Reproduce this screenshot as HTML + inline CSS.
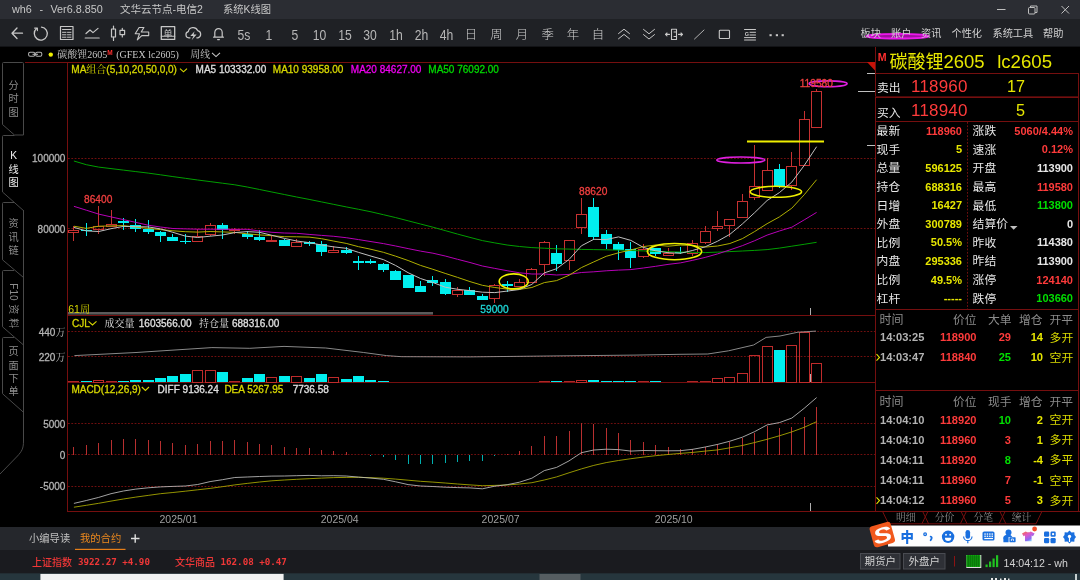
<!DOCTYPE html>
<html lang="zh-CN"><head><meta charset="utf-8"><title>wh6 - 系统K线图</title>
<style>
html,body{margin:0;padding:0;background:#000;overflow:hidden}
body{width:1080px;height:580px;font-family:"Liberation Sans","Noto Sans CJK SC",sans-serif}
svg{display:block;position:absolute;left:0;top:0;will-change:transform;opacity:0.999}
text{white-space:pre}
</style></head><body>
<svg width="1080" height="580" viewBox="0 0 1080 580">
<rect x="0" y="0" width="1080" height="580" fill="#000"/>
<rect x="0" y="0" width="1080" height="19" fill="#2c2e34"/>
<rect x="0" y="19" width="1080" height="27.6" fill="#202226"/>
<rect x="0" y="527" width="1080" height="23" fill="#26282d"/>
<rect x="0" y="550" width="1080" height="24" fill="#1b1c20"/>
<rect x="0" y="573.3" width="1080" height="6.7" fill="#27373e"/>
<rect x="40.4" y="573.9" width="243.2" height="6.2" fill="#f2f2f2"/>
<rect x="539.5" y="574" width="41" height="6" fill="#565e62"/>
<g stroke="#761010" stroke-width="1" fill="none" shape-rendering="crispEdges">
<line x1="25" y1="62.5" x2="875" y2="62.5"/>
<line x1="67.5" y1="62" x2="67.5" y2="511"/>
<line x1="67" y1="315.5" x2="875" y2="315.5"/>
<line x1="67" y1="382.5" x2="875" y2="382.5"/>
<line x1="67" y1="511.5" x2="1080" y2="511.5"/>
<line x1="875.5" y1="47" x2="875.5" y2="511"/>
</g>
<g stroke="#701010" stroke-width="1" stroke-dasharray="1.8 1.53" fill="none">
<line x1="68" y1="158.5" x2="875" y2="158.5"/>
<line x1="68" y1="228.5" x2="875" y2="228.5"/>
<line x1="68" y1="331.5" x2="875" y2="331.5"/>
<line x1="68" y1="356.5" x2="875" y2="356.5"/>
<line x1="68" y1="423.5" x2="875" y2="423.5"/>
<line x1="68" y1="454.5" x2="875" y2="454.5"/>
<line x1="68" y1="486.5" x2="875" y2="486.5"/>
</g>
<rect x="68" y="312" width="365" height="2.6" fill="#5c5c5c"/>
<polygon points="867,62 875,62 875,70.5" fill="#c8140a"/>
<g stroke="#c0c0c0" stroke-width="1" shape-rendering="crispEdges"><line x1="867" y1="73.5" x2="875" y2="73.5"/><line x1="858" y1="91.5" x2="875" y2="91.5"/><line x1="867" y1="145.5" x2="875" y2="145.5"/></g>
<g stroke="#b0b0b0" stroke-width="1" shape-rendering="crispEdges"><line x1="810.5" y1="308" x2="810.5" y2="315"/><line x1="810.5" y1="374" x2="810.5" y2="382"/><line x1="810.5" y1="503" x2="810.5" y2="511"/></g>
<g stroke="#c83232" stroke-width="1" fill="none" shape-rendering="crispEdges">
<line x1="73.5" y1="226.0" x2="73.5" y2="230.5"/>
<line x1="73.5" y1="232.5" x2="73.5" y2="241.0"/>
<rect x="68.5" y="230.5" width="10" height="2.0"/></g>
<g shape-rendering="crispEdges"><line x1="86.5" y1="223.0" x2="86.5" y2="236.0" stroke="#00f0f0" stroke-width="1"/>
<rect x="81" y="230" width="11" height="1" fill="#00f0f0"/></g>
<g stroke="#c83232" stroke-width="1" fill="none" shape-rendering="crispEdges">
<line x1="98.5" y1="206.0" x2="98.5" y2="226.5"/>
<line x1="98.5" y1="229.5" x2="98.5" y2="234.0"/>
<rect x="93.5" y="226.5" width="10" height="3.0"/></g>
<g stroke="#c83232" stroke-width="1" fill="none" shape-rendering="crispEdges">
<line x1="111.5" y1="210.0" x2="111.5" y2="224.5"/>
<rect x="106.5" y="224.5" width="10" height="2.0"/></g>
<g shape-rendering="crispEdges"><line x1="123.5" y1="218.0" x2="123.5" y2="230.0" stroke="#00f0f0" stroke-width="1"/>
<rect x="118" y="221" width="11" height="2" fill="#00f0f0"/></g>
<g shape-rendering="crispEdges"><line x1="135.5" y1="219.0" x2="135.5" y2="232.0" stroke="#00f0f0" stroke-width="1"/>
<rect x="130" y="225" width="11" height="4" fill="#00f0f0"/></g>
<g shape-rendering="crispEdges"><line x1="148.5" y1="220.0" x2="148.5" y2="234.0" stroke="#00f0f0" stroke-width="1"/>
<rect x="143" y="229" width="11" height="3" fill="#00f0f0"/></g>
<g shape-rendering="crispEdges"><line x1="160.5" y1="231.0" x2="160.5" y2="242.0" stroke="#00f0f0" stroke-width="1"/>
<rect x="155" y="232" width="11" height="4" fill="#00f0f0"/></g>
<g shape-rendering="crispEdges"><line x1="172.5" y1="234.0" x2="172.5" y2="241.0" stroke="#00f0f0" stroke-width="1"/>
<rect x="167" y="237" width="11" height="4" fill="#00f0f0"/></g>
<g shape-rendering="crispEdges"><line x1="185.5" y1="234.0" x2="185.5" y2="244.0" stroke="#00f0f0" stroke-width="1"/>
<rect x="180" y="241" width="11" height="1" fill="#00f0f0"/></g>
<g stroke="#c83232" stroke-width="1" fill="none" shape-rendering="crispEdges">
<line x1="197.5" y1="229.0" x2="197.5" y2="236.5"/>
<rect x="192.5" y="236.5" width="10" height="5.0"/></g>
<g stroke="#c83232" stroke-width="1" fill="none" shape-rendering="crispEdges">
<line x1="210.5" y1="223.0" x2="210.5" y2="225.5"/>
<line x1="210.5" y1="234.5" x2="210.5" y2="236.0"/>
<rect x="205.5" y="225.5" width="10" height="9.0"/></g>
<g shape-rendering="crispEdges"><line x1="222.5" y1="223.0" x2="222.5" y2="239.0" stroke="#00f0f0" stroke-width="1"/>
<rect x="217" y="225" width="11" height="5" fill="#00f0f0"/></g>
<g stroke="#c83232" stroke-width="1" fill="none" shape-rendering="crispEdges">
<line x1="234.5" y1="228.0" x2="234.5" y2="229.5"/>
<line x1="234.5" y1="230.5" x2="234.5" y2="234.0"/>
<rect x="229.5" y="229.5" width="10" height="1.0"/></g>
<g shape-rendering="crispEdges"><line x1="247.5" y1="231.0" x2="247.5" y2="239.0" stroke="#00f0f0" stroke-width="1"/>
<rect x="242" y="234" width="11" height="3" fill="#00f0f0"/></g>
<g shape-rendering="crispEdges"><line x1="259.5" y1="230.0" x2="259.5" y2="241.0" stroke="#00f0f0" stroke-width="1"/>
<rect x="254" y="237" width="11" height="3" fill="#00f0f0"/></g>
<g stroke="#c83232" stroke-width="1" fill="none" shape-rendering="crispEdges">
<line x1="271.5" y1="236.0" x2="271.5" y2="240.5"/>
<rect x="266.5" y="240.5" width="10" height="1.0"/></g>
<g shape-rendering="crispEdges"><line x1="284.5" y1="239.0" x2="284.5" y2="246.0" stroke="#00f0f0" stroke-width="1"/>
<rect x="279" y="240" width="11" height="6" fill="#00f0f0"/></g>
<g stroke="#c83232" stroke-width="1" fill="none" shape-rendering="crispEdges">
<line x1="296.5" y1="239.0" x2="296.5" y2="242.5"/>
<rect x="291.5" y="242.5" width="10" height="4.0"/></g>
<g shape-rendering="crispEdges"><line x1="309.5" y1="241.0" x2="309.5" y2="246.0" stroke="#00f0f0" stroke-width="1"/>
<rect x="304" y="242" width="11" height="2" fill="#00f0f0"/></g>
<g shape-rendering="crispEdges"><line x1="321.5" y1="241.0" x2="321.5" y2="256.0" stroke="#00f0f0" stroke-width="1"/>
<rect x="316" y="244" width="11" height="8" fill="#00f0f0"/></g>
<g stroke="#c83232" stroke-width="1" fill="none" shape-rendering="crispEdges">
<line x1="333.5" y1="246.0" x2="333.5" y2="250.5"/>
<rect x="328.5" y="250.5" width="10" height="2.0"/></g>
<g shape-rendering="crispEdges"><line x1="346.5" y1="247.0" x2="346.5" y2="254.0" stroke="#00f0f0" stroke-width="1"/>
<rect x="341" y="250" width="11" height="3" fill="#00f0f0"/></g>
<g shape-rendering="crispEdges"><line x1="358.5" y1="256.0" x2="358.5" y2="270.0" stroke="#00f0f0" stroke-width="1"/>
<rect x="353" y="261" width="11" height="2" fill="#00f0f0"/></g>
<g shape-rendering="crispEdges"><line x1="370.5" y1="259.0" x2="370.5" y2="264.0" stroke="#00f0f0" stroke-width="1"/>
<rect x="365" y="261" width="11" height="2" fill="#00f0f0"/></g>
<g shape-rendering="crispEdges"><line x1="383.5" y1="263.0" x2="383.5" y2="272.0" stroke="#00f0f0" stroke-width="1"/>
<rect x="378" y="264" width="11" height="6" fill="#00f0f0"/></g>
<g shape-rendering="crispEdges"><line x1="395.5" y1="270.0" x2="395.5" y2="280.0" stroke="#00f0f0" stroke-width="1"/>
<rect x="390" y="271" width="11" height="9" fill="#00f0f0"/></g>
<g shape-rendering="crispEdges"><line x1="408.5" y1="275.0" x2="408.5" y2="288.0" stroke="#00f0f0" stroke-width="1"/>
<rect x="403" y="275" width="11" height="13" fill="#00f0f0"/></g>
<g shape-rendering="crispEdges"><line x1="420.5" y1="281.0" x2="420.5" y2="292.0" stroke="#00f0f0" stroke-width="1"/>
<rect x="415" y="286" width="11" height="6" fill="#00f0f0"/></g>
<g shape-rendering="crispEdges"><line x1="432.5" y1="276.0" x2="432.5" y2="286.0" stroke="#00f0f0" stroke-width="1"/>
<rect x="427" y="280" width="11" height="3" fill="#00f0f0"/></g>
<g shape-rendering="crispEdges"><line x1="445.5" y1="279.0" x2="445.5" y2="295.0" stroke="#00f0f0" stroke-width="1"/>
<rect x="440" y="282" width="11" height="12" fill="#00f0f0"/></g>
<g stroke="#c83232" stroke-width="1" fill="none" shape-rendering="crispEdges">
<line x1="457.5" y1="287.0" x2="457.5" y2="290.5"/>
<line x1="457.5" y1="294.5" x2="457.5" y2="297.0"/>
<rect x="452.5" y="290.5" width="10" height="4.0"/></g>
<g shape-rendering="crispEdges"><line x1="469.5" y1="287.0" x2="469.5" y2="295.0" stroke="#00f0f0" stroke-width="1"/>
<rect x="464" y="290" width="11" height="5" fill="#00f0f0"/></g>
<g shape-rendering="crispEdges"><line x1="482.5" y1="294.0" x2="482.5" y2="300.0" stroke="#00f0f0" stroke-width="1"/>
<rect x="477" y="296" width="11" height="4" fill="#00f0f0"/></g>
<g stroke="#c83232" stroke-width="1" fill="none" shape-rendering="crispEdges">
<line x1="494.5" y1="284.0" x2="494.5" y2="285.5"/>
<line x1="494.5" y1="298.5" x2="494.5" y2="303.0"/>
<rect x="489.5" y="285.5" width="10" height="13.0"/></g>
<g shape-rendering="crispEdges"><line x1="507.5" y1="281.0" x2="507.5" y2="292.0" stroke="#00f0f0" stroke-width="1"/>
<rect x="502" y="284" width="11" height="2" fill="#00f0f0"/></g>
<g stroke="#c83232" stroke-width="1" fill="none" shape-rendering="crispEdges">
<line x1="519.5" y1="279.0" x2="519.5" y2="282.5"/>
<rect x="514.5" y="282.5" width="10" height="4.0"/></g>
<g stroke="#c83232" stroke-width="1" fill="none" shape-rendering="crispEdges">
<line x1="531.5" y1="268.0" x2="531.5" y2="269.5"/>
<rect x="526.5" y="269.5" width="10" height="13.0"/></g>
<g stroke="#c83232" stroke-width="1" fill="none" shape-rendering="crispEdges">
<line x1="544.5" y1="241.0" x2="544.5" y2="242.5"/>
<line x1="544.5" y1="264.5" x2="544.5" y2="276.0"/>
<rect x="539.5" y="242.5" width="10" height="22.0"/></g>
<g shape-rendering="crispEdges"><line x1="556.5" y1="245.0" x2="556.5" y2="271.0" stroke="#00f0f0" stroke-width="1"/>
<rect x="551" y="253" width="11" height="11" fill="#00f0f0"/></g>
<g stroke="#c83232" stroke-width="1" fill="none" shape-rendering="crispEdges">
<line x1="569.5" y1="260.5" x2="569.5" y2="270.0"/>
<rect x="564.5" y="240.5" width="10" height="20.0"/></g>
<g stroke="#c83232" stroke-width="1" fill="none" shape-rendering="crispEdges">
<line x1="581.5" y1="198.0" x2="581.5" y2="214.5"/>
<line x1="581.5" y1="227.5" x2="581.5" y2="234.0"/>
<rect x="576.5" y="214.5" width="10" height="13.0"/></g>
<g shape-rendering="crispEdges"><line x1="593.5" y1="198.0" x2="593.5" y2="240.0" stroke="#00f0f0" stroke-width="1"/>
<rect x="588" y="207" width="11" height="30" fill="#00f0f0"/></g>
<g shape-rendering="crispEdges"><line x1="606.5" y1="230.0" x2="606.5" y2="249.0" stroke="#00f0f0" stroke-width="1"/>
<rect x="601" y="234" width="11" height="10" fill="#00f0f0"/></g>
<g shape-rendering="crispEdges"><line x1="618.5" y1="242.0" x2="618.5" y2="260.0" stroke="#00f0f0" stroke-width="1"/>
<rect x="613" y="244" width="11" height="6" fill="#00f0f0"/></g>
<g shape-rendering="crispEdges"><line x1="630.5" y1="242.0" x2="630.5" y2="268.0" stroke="#00f0f0" stroke-width="1"/>
<rect x="625" y="249" width="11" height="9" fill="#00f0f0"/></g>
<g stroke="#c83232" stroke-width="1" fill="none" shape-rendering="crispEdges">
<line x1="643.5" y1="244.0" x2="643.5" y2="249.5"/>
<line x1="643.5" y1="256.5" x2="643.5" y2="258.0"/>
<rect x="638.5" y="249.5" width="10" height="7.0"/></g>
<g shape-rendering="crispEdges"><line x1="655.5" y1="248.0" x2="655.5" y2="256.0" stroke="#00f0f0" stroke-width="1"/>
<rect x="650" y="248" width="11" height="6" fill="#00f0f0"/></g>
<g stroke="#c83232" stroke-width="1" fill="none" shape-rendering="crispEdges">
<line x1="668.5" y1="248.0" x2="668.5" y2="253.5"/>
<rect x="663.5" y="253.5" width="10" height="2.0"/></g>
<g shape-rendering="crispEdges"><line x1="680.5" y1="247.0" x2="680.5" y2="254.0" stroke="#00f0f0" stroke-width="1"/>
<rect x="675" y="252" width="11" height="1" fill="#00f0f0"/></g>
<g stroke="#c83232" stroke-width="1" fill="none" shape-rendering="crispEdges">
<line x1="692.5" y1="240.0" x2="692.5" y2="243.5"/>
<line x1="692.5" y1="253.5" x2="692.5" y2="256.0"/>
<rect x="687.5" y="243.5" width="10" height="10.0"/></g>
<g stroke="#c83232" stroke-width="1" fill="none" shape-rendering="crispEdges">
<line x1="705.5" y1="226.0" x2="705.5" y2="231.5"/>
<line x1="705.5" y1="242.5" x2="705.5" y2="244.0"/>
<rect x="700.5" y="231.5" width="10" height="11.0"/></g>
<g stroke="#c83232" stroke-width="1" fill="none" shape-rendering="crispEdges">
<line x1="717.5" y1="211.0" x2="717.5" y2="226.5"/>
<line x1="717.5" y1="228.5" x2="717.5" y2="231.0"/>
<rect x="712.5" y="226.5" width="10" height="2.0"/></g>
<g stroke="#c83232" stroke-width="1" fill="none" shape-rendering="crispEdges">
<line x1="729.5" y1="219.0" x2="729.5" y2="219.5"/>
<line x1="729.5" y1="225.5" x2="729.5" y2="237.0"/>
<rect x="724.5" y="219.5" width="10" height="6.0"/></g>
<g stroke="#c83232" stroke-width="1" fill="none" shape-rendering="crispEdges">
<line x1="742.5" y1="194.0" x2="742.5" y2="201.5"/>
<rect x="737.5" y="201.5" width="10" height="16.0"/></g>
<g stroke="#c83232" stroke-width="1" fill="none" shape-rendering="crispEdges">
<line x1="754.5" y1="145.0" x2="754.5" y2="186.5"/>
<line x1="754.5" y1="197.5" x2="754.5" y2="200.0"/>
<rect x="749.5" y="186.5" width="10" height="11.0"/></g>
<g stroke="#c83232" stroke-width="1" fill="none" shape-rendering="crispEdges">
<line x1="767.5" y1="158.0" x2="767.5" y2="170.5"/>
<rect x="762.5" y="170.5" width="10" height="20.0"/></g>
<g shape-rendering="crispEdges"><line x1="779.5" y1="164.0" x2="779.5" y2="188.0" stroke="#00f0f0" stroke-width="1"/>
<rect x="774" y="169" width="11" height="17" fill="#00f0f0"/></g>
<g stroke="#c83232" stroke-width="1" fill="none" shape-rendering="crispEdges">
<line x1="791.5" y1="152.0" x2="791.5" y2="166.5"/>
<line x1="791.5" y1="185.5" x2="791.5" y2="190.0"/>
<rect x="786.5" y="166.5" width="10" height="19.0"/></g>
<g stroke="#c83232" stroke-width="1" fill="none" shape-rendering="crispEdges">
<line x1="804.5" y1="111.0" x2="804.5" y2="119.5"/>
<rect x="799.5" y="119.5" width="10" height="46.0"/></g>
<g stroke="#c83232" stroke-width="1" fill="none" shape-rendering="crispEdges">
<line x1="816.5" y1="89.0" x2="816.5" y2="91.5"/>
<rect x="811.5" y="91.5" width="10" height="36.0"/></g>
<polyline points="73.9,161.0 86.3,164.7 98.7,167.1 111.0,168.6 123.4,170.1 135.8,171.6 148.2,173.1 160.5,174.8 172.9,176.6 185.3,178.3 197.7,180.0 210.1,181.6 222.4,183.2 234.8,184.8 247.2,187.0 259.6,189.5 271.9,192.0 284.3,194.5 296.7,197.0 309.1,199.4 321.5,201.9 333.8,204.4 346.2,206.9 358.6,209.3 371.0,211.8 383.4,214.7 395.7,217.6 408.1,220.8 420.5,224.0 432.9,227.2 445.2,230.6 457.6,234.1 470.0,237.4 482.4,240.6 494.8,242.9 507.1,245.0 519.5,246.5 531.9,247.6 544.3,248.2 556.6,248.8 569.0,249.1 581.4,249.4 593.8,249.6 606.2,249.8 618.5,250.1 630.9,250.5 643.3,250.9 655.7,251.4 668.0,251.7 680.4,252.0 692.8,252.3 705.2,252.6 717.6,252.1 729.9,251.6 742.3,251.0 754.7,250.4 767.1,249.6 779.4,248.1 791.8,246.2 804.2,244.3 816.6,242.3" fill="none" stroke="#00a000" stroke-width="1.0" />
<polyline points="73.9,206.3 86.3,210.2 98.7,214.1 111.0,216.9 123.4,219.6 135.8,222.4 148.2,225.2 160.5,227.0 172.9,228.5 185.3,228.9 197.7,229.2 210.1,229.2 222.4,229.3 234.8,229.3 247.2,229.3 259.6,231.0 271.9,232.3 284.3,233.0 296.7,233.3 309.1,234.4 321.5,235.4 333.8,236.3 346.2,237.7 358.6,239.6 371.0,241.6 383.4,243.6 395.7,246.0 408.1,248.6 420.5,251.1 432.9,253.2 445.2,256.0 457.6,259.3 470.0,262.5 482.4,266.0 494.8,268.4 507.1,270.7 519.5,272.8 531.9,274.0 544.3,274.0 556.6,275.0 569.0,274.4 581.4,272.5 593.8,271.8 606.2,270.8 618.5,270.1 630.9,269.6 643.3,268.0 655.7,266.3 668.0,264.4 680.4,262.9 692.8,260.3 705.2,257.4 717.6,253.9 729.9,249.9 742.3,245.7 754.7,240.7 767.1,235.1 779.4,231.0 791.8,227.2 804.2,219.9 816.6,212.4" fill="none" stroke="#b800b8" stroke-width="1.0" />
<polyline points="73.9,226.2 86.3,228.4 98.7,226.2 111.0,225.9 123.4,225.6 135.8,227.0 148.2,228.4 160.5,229.6 172.9,230.8 185.3,231.7 197.7,232.1 210.1,231.5 222.4,231.9 234.8,232.4 247.2,233.8 259.6,234.9 271.9,235.7 284.3,236.7 296.7,236.8 309.1,237.1 321.5,238.7 333.8,241.1 346.2,243.4 358.6,246.7 371.0,249.3 383.4,252.3 395.7,256.2 408.1,260.5 420.5,265.4 432.9,269.3 445.2,273.4 457.6,277.4 470.0,281.6 482.4,285.3 494.8,287.5 507.1,289.1 519.5,289.4 531.9,287.5 544.3,282.6 556.6,280.6 569.0,275.3 581.4,267.6 593.8,261.9 606.2,256.3 618.5,252.8 630.9,250.0 643.3,246.6 655.7,245.0 668.0,246.2 680.4,245.1 692.8,245.4 705.2,247.1 717.6,246.0 729.9,243.5 742.3,238.7 754.7,231.5 767.1,223.7 779.4,216.9 791.8,208.2 804.2,194.8 816.6,179.7" fill="none" stroke="#b0b000" stroke-width="1.0" />
<polyline points="73.9,227.4 86.3,230.9 98.7,231.5 111.0,228.7 123.4,226.4 135.8,226.7 148.2,226.9 160.5,228.9 172.9,232.3 185.3,236.1 197.7,237.5 210.1,236.2 222.4,235.0 234.8,232.6 247.2,231.6 259.6,232.3 271.9,235.3 284.3,238.4 296.7,241.0 309.1,242.6 321.5,245.0 333.8,246.9 346.2,248.3 358.6,252.4 371.0,256.1 383.4,259.6 395.7,265.5 408.1,272.7 420.5,278.5 432.9,282.5 445.2,287.2 457.6,289.3 470.0,290.6 482.4,292.2 494.8,292.6 507.1,291.1 519.5,289.5 531.9,284.4 544.3,272.9 556.6,268.7 569.0,259.5 581.4,245.8 593.8,239.3 606.2,239.6 618.5,236.9 630.9,240.4 643.3,247.4 655.7,250.8 668.0,252.7 680.4,253.3 692.8,250.4 705.2,246.8 717.6,241.2 729.9,234.3 742.3,224.0 754.7,212.6 767.1,200.5 779.4,192.6 791.8,182.1 804.2,165.5 816.6,146.7" fill="none" stroke="#c0c0c0" stroke-width="1.0" />
<ellipse cx="513.7" cy="281.4" rx="14.5" ry="7.5" fill="none" stroke="#f0f000" stroke-width="1.6"/>
<ellipse cx="674.5" cy="251.6" rx="27.2" ry="8.1" fill="none" stroke="#f0f000" stroke-width="1.6"/>
<ellipse cx="775.9" cy="191.8" rx="25.7" ry="5.5" fill="none" stroke="#f0f000" stroke-width="1.6"/>
<line x1="747" y1="141.4" x2="824" y2="141.4" stroke="#f0f000" stroke-width="2"/>
<ellipse cx="740.8" cy="160" rx="24" ry="3" fill="none" stroke="#e020e0" stroke-width="1.6"/>
<ellipse cx="828.1" cy="83.8" rx="19" ry="2.9" fill="none" stroke="#e020e0" stroke-width="1.6"/>
<ellipse cx="897.6" cy="36.2" rx="31.4" ry="2.3" fill="#a010a0" stroke="#ec18ec" stroke-width="1.9"/>
<text x="84" y="203" font-family="'Liberation Sans','Noto Sans CJK SC',sans-serif" font-size="10.2" fill="#f04040" text-anchor="start" font-weight="normal" stroke="#f04040" stroke-width="0.3">86400</text>
<text x="579" y="195.4" font-family="'Liberation Sans','Noto Sans CJK SC',sans-serif" font-size="10.2" fill="#f04040" text-anchor="start" font-weight="normal" stroke="#f04040" stroke-width="0.3">88620</text>
<text x="480.3" y="313.3" font-family="'Liberation Sans','Noto Sans CJK SC',sans-serif" font-size="10.2" fill="#20d8d8" text-anchor="start" font-weight="normal" stroke="#20d8d8" stroke-width="0.3">59000</text>
<text x="799.7" y="87" font-family="'Liberation Sans','Noto Sans CJK SC',sans-serif" font-size="10.2" fill="#f04040" text-anchor="start" font-weight="normal" stroke="#f04040" stroke-width="0.3">119580</text>
<rect x="68" y="381" width="11" height="1" fill="#b02828" shape-rendering="crispEdges"/>
<rect x="81" y="381" width="11" height="1" fill="#00f0f0" shape-rendering="crispEdges"/>
<rect x="93.5" y="380.5" width="10" height="2" fill="none" stroke="#c02c2c" stroke-width="1" shape-rendering="crispEdges"/>
<rect x="106" y="381" width="11" height="1" fill="#b02828" shape-rendering="crispEdges"/>
<rect x="118" y="381" width="11" height="1" fill="#00f0f0" shape-rendering="crispEdges"/>
<rect x="130" y="380" width="11" height="2" fill="#00f0f0" shape-rendering="crispEdges"/>
<rect x="143" y="380" width="11" height="2" fill="#00f0f0" shape-rendering="crispEdges"/>
<rect x="155" y="378" width="11" height="4" fill="#00f0f0" shape-rendering="crispEdges"/>
<rect x="167" y="376" width="11" height="6" fill="#00f0f0" shape-rendering="crispEdges"/>
<rect x="180" y="374" width="11" height="8" fill="#00f0f0" shape-rendering="crispEdges"/>
<rect x="192.5" y="370.5" width="10" height="12" fill="none" stroke="#c02c2c" stroke-width="1" shape-rendering="crispEdges"/>
<rect x="205.5" y="370.5" width="10" height="12" fill="none" stroke="#c02c2c" stroke-width="1" shape-rendering="crispEdges"/>
<rect x="217" y="372" width="11" height="10" fill="#00f0f0" shape-rendering="crispEdges"/>
<rect x="229" y="381" width="11" height="1" fill="#b02828" shape-rendering="crispEdges"/>
<rect x="242" y="378" width="11" height="4" fill="#00f0f0" shape-rendering="crispEdges"/>
<rect x="254" y="374" width="11" height="8" fill="#00f0f0" shape-rendering="crispEdges"/>
<rect x="266.5" y="377.5" width="10" height="5" fill="none" stroke="#c02c2c" stroke-width="1" shape-rendering="crispEdges"/>
<rect x="279" y="376" width="11" height="6" fill="#00f0f0" shape-rendering="crispEdges"/>
<rect x="291.5" y="376.5" width="10" height="6" fill="none" stroke="#c02c2c" stroke-width="1" shape-rendering="crispEdges"/>
<rect x="304" y="378" width="11" height="4" fill="#00f0f0" shape-rendering="crispEdges"/>
<rect x="316" y="374" width="11" height="8" fill="#00f0f0" shape-rendering="crispEdges"/>
<rect x="328.5" y="377.5" width="10" height="5" fill="none" stroke="#c02c2c" stroke-width="1" shape-rendering="crispEdges"/>
<rect x="341" y="379" width="11" height="3" fill="#00f0f0" shape-rendering="crispEdges"/>
<rect x="353" y="376" width="11" height="6" fill="#00f0f0" shape-rendering="crispEdges"/>
<rect x="365" y="380" width="11" height="2" fill="#00f0f0" shape-rendering="crispEdges"/>
<rect x="378" y="381" width="11" height="1" fill="#00f0f0" shape-rendering="crispEdges"/>
<rect x="539" y="381" width="11" height="1" fill="#b02828" shape-rendering="crispEdges"/>
<rect x="551" y="381" width="11" height="1" fill="#00f0f0" shape-rendering="crispEdges"/>
<rect x="564" y="381" width="11" height="1" fill="#b02828" shape-rendering="crispEdges"/>
<rect x="576.5" y="380.5" width="10" height="2" fill="none" stroke="#c02c2c" stroke-width="1" shape-rendering="crispEdges"/>
<rect x="588" y="380" width="11" height="2" fill="#00f0f0" shape-rendering="crispEdges"/>
<rect x="601" y="381" width="11" height="1" fill="#00f0f0" shape-rendering="crispEdges"/>
<rect x="613" y="381" width="11" height="1" fill="#00f0f0" shape-rendering="crispEdges"/>
<rect x="625" y="381" width="11" height="1" fill="#00f0f0" shape-rendering="crispEdges"/>
<rect x="638" y="381" width="11" height="1" fill="#b02828" shape-rendering="crispEdges"/>
<rect x="650" y="381" width="11" height="1" fill="#00f0f0" shape-rendering="crispEdges"/>
<rect x="687" y="381" width="11" height="1" fill="#b02828" shape-rendering="crispEdges"/>
<rect x="700" y="381" width="11" height="1" fill="#b02828" shape-rendering="crispEdges"/>
<rect x="712.5" y="378.5" width="10" height="4" fill="none" stroke="#c02c2c" stroke-width="1" shape-rendering="crispEdges"/>
<rect x="724.5" y="377.5" width="10" height="5" fill="none" stroke="#c02c2c" stroke-width="1" shape-rendering="crispEdges"/>
<rect x="737.5" y="373.5" width="10" height="9" fill="none" stroke="#c02c2c" stroke-width="1" shape-rendering="crispEdges"/>
<rect x="749.5" y="355.5" width="10" height="27" fill="none" stroke="#c02c2c" stroke-width="1" shape-rendering="crispEdges"/>
<rect x="762.5" y="346.5" width="10" height="36" fill="none" stroke="#c02c2c" stroke-width="1" shape-rendering="crispEdges"/>
<rect x="774" y="350" width="11" height="32" fill="#00f0f0" shape-rendering="crispEdges"/>
<rect x="786.5" y="345.5" width="10" height="37" fill="none" stroke="#c02c2c" stroke-width="1" shape-rendering="crispEdges"/>
<rect x="799.5" y="332.5" width="10" height="50" fill="none" stroke="#c02c2c" stroke-width="1" shape-rendering="crispEdges"/>
<rect x="811.5" y="363.5" width="10" height="19" fill="none" stroke="#c02c2c" stroke-width="1" shape-rendering="crispEdges"/>
<polyline points="74.4,355.6 136.0,352.5 211.9,347.6 249.8,348.3 284.0,346.4 325.8,348.0 363.7,352.5 386.5,355.6 401.7,356.7 470.0,356.9 557.0,355.9 635.0,355.1 680.0,354.3 707.8,354.0 728.6,350.8 753.6,345.0 766.1,337.4 780.0,336.0 798.0,332.2 809.0,331.5 816.0,331.1" fill="none" stroke="#9a9a9a" stroke-width="0.9" />
<line x1="73.5" y1="454.8" x2="73.5" y2="447.2" stroke="#b83030" stroke-width="1" shape-rendering="crispEdges"/>
<line x1="86.5" y1="454.8" x2="86.5" y2="445.3" stroke="#b83030" stroke-width="1" shape-rendering="crispEdges"/>
<line x1="98.5" y1="454.8" x2="98.5" y2="443.0" stroke="#b83030" stroke-width="1" shape-rendering="crispEdges"/>
<line x1="111.5" y1="454.8" x2="111.5" y2="440.0" stroke="#b83030" stroke-width="1" shape-rendering="crispEdges"/>
<line x1="123.5" y1="454.8" x2="123.5" y2="438.8" stroke="#b83030" stroke-width="1" shape-rendering="crispEdges"/>
<line x1="135.5" y1="454.8" x2="135.5" y2="438.8" stroke="#b83030" stroke-width="1" shape-rendering="crispEdges"/>
<line x1="148.5" y1="454.8" x2="148.5" y2="439.6" stroke="#b83030" stroke-width="1" shape-rendering="crispEdges"/>
<line x1="160.5" y1="454.8" x2="160.5" y2="441.1" stroke="#b83030" stroke-width="1" shape-rendering="crispEdges"/>
<line x1="172.5" y1="454.8" x2="172.5" y2="442.7" stroke="#b83030" stroke-width="1" shape-rendering="crispEdges"/>
<line x1="185.5" y1="454.8" x2="185.5" y2="444.5" stroke="#b83030" stroke-width="1" shape-rendering="crispEdges"/>
<line x1="197.5" y1="454.8" x2="197.5" y2="444.2" stroke="#b83030" stroke-width="1" shape-rendering="crispEdges"/>
<line x1="210.5" y1="454.8" x2="210.5" y2="441.1" stroke="#b83030" stroke-width="1" shape-rendering="crispEdges"/>
<line x1="222.5" y1="454.8" x2="222.5" y2="440.8" stroke="#b83030" stroke-width="1" shape-rendering="crispEdges"/>
<line x1="234.5" y1="454.8" x2="234.5" y2="440.0" stroke="#b83030" stroke-width="1" shape-rendering="crispEdges"/>
<line x1="247.5" y1="454.8" x2="247.5" y2="441.9" stroke="#b83030" stroke-width="1" shape-rendering="crispEdges"/>
<line x1="259.5" y1="454.8" x2="259.5" y2="443.8" stroke="#b83030" stroke-width="1" shape-rendering="crispEdges"/>
<line x1="271.5" y1="454.8" x2="271.5" y2="445.3" stroke="#b83030" stroke-width="1" shape-rendering="crispEdges"/>
<line x1="284.5" y1="454.8" x2="284.5" y2="446.8" stroke="#b83030" stroke-width="1" shape-rendering="crispEdges"/>
<line x1="296.5" y1="454.8" x2="296.5" y2="447.6" stroke="#b83030" stroke-width="1" shape-rendering="crispEdges"/>
<line x1="309.5" y1="454.8" x2="309.5" y2="448.3" stroke="#b83030" stroke-width="1" shape-rendering="crispEdges"/>
<line x1="321.5" y1="454.8" x2="321.5" y2="450.2" stroke="#b83030" stroke-width="1" shape-rendering="crispEdges"/>
<line x1="333.5" y1="454.8" x2="333.5" y2="451.0" stroke="#b83030" stroke-width="1" shape-rendering="crispEdges"/>
<line x1="346.5" y1="454.8" x2="346.5" y2="452.1" stroke="#b83030" stroke-width="1" shape-rendering="crispEdges"/>
<line x1="358.5" y1="454.8" x2="358.5" y2="454.5" stroke="#b83030" stroke-width="1" shape-rendering="crispEdges"/>
<line x1="370.5" y1="454.8" x2="370.5" y2="455.6" stroke="#00b0b0" stroke-width="1" shape-rendering="crispEdges"/>
<line x1="383.5" y1="454.8" x2="383.5" y2="457.1" stroke="#00b0b0" stroke-width="1" shape-rendering="crispEdges"/>
<line x1="395.5" y1="454.8" x2="395.5" y2="460.1" stroke="#00b0b0" stroke-width="1" shape-rendering="crispEdges"/>
<line x1="408.5" y1="454.8" x2="408.5" y2="463.5" stroke="#00b0b0" stroke-width="1" shape-rendering="crispEdges"/>
<line x1="420.5" y1="454.8" x2="420.5" y2="464.3" stroke="#00b0b0" stroke-width="1" shape-rendering="crispEdges"/>
<line x1="432.5" y1="454.8" x2="432.5" y2="463.5" stroke="#00b0b0" stroke-width="1" shape-rendering="crispEdges"/>
<line x1="445.5" y1="454.8" x2="445.5" y2="463.2" stroke="#00b0b0" stroke-width="1" shape-rendering="crispEdges"/>
<line x1="457.5" y1="454.8" x2="457.5" y2="462.0" stroke="#00b0b0" stroke-width="1" shape-rendering="crispEdges"/>
<line x1="469.5" y1="454.8" x2="469.5" y2="460.9" stroke="#00b0b0" stroke-width="1" shape-rendering="crispEdges"/>
<line x1="482.5" y1="454.8" x2="482.5" y2="461.0" stroke="#00b0b0" stroke-width="1" shape-rendering="crispEdges"/>
<line x1="494.5" y1="454.8" x2="494.5" y2="456.3" stroke="#00b0b0" stroke-width="1" shape-rendering="crispEdges"/>
<line x1="507.5" y1="454.8" x2="507.5" y2="454.3" stroke="#b83030" stroke-width="1" shape-rendering="crispEdges"/>
<line x1="519.5" y1="454.8" x2="519.5" y2="451.3" stroke="#b83030" stroke-width="1" shape-rendering="crispEdges"/>
<line x1="531.5" y1="454.8" x2="531.5" y2="445.8" stroke="#b83030" stroke-width="1" shape-rendering="crispEdges"/>
<line x1="544.5" y1="454.8" x2="544.5" y2="436.1" stroke="#b83030" stroke-width="1" shape-rendering="crispEdges"/>
<line x1="556.5" y1="454.8" x2="556.5" y2="435.8" stroke="#b83030" stroke-width="1" shape-rendering="crispEdges"/>
<line x1="569.5" y1="454.8" x2="569.5" y2="431.1" stroke="#b83030" stroke-width="1" shape-rendering="crispEdges"/>
<line x1="581.5" y1="454.8" x2="581.5" y2="422.5" stroke="#b83030" stroke-width="1" shape-rendering="crispEdges"/>
<line x1="593.5" y1="454.8" x2="593.5" y2="424.1" stroke="#b83030" stroke-width="1" shape-rendering="crispEdges"/>
<line x1="606.5" y1="454.8" x2="606.5" y2="428.0" stroke="#b83030" stroke-width="1" shape-rendering="crispEdges"/>
<line x1="618.5" y1="454.8" x2="618.5" y2="433.0" stroke="#b83030" stroke-width="1" shape-rendering="crispEdges"/>
<line x1="630.5" y1="454.8" x2="630.5" y2="439.6" stroke="#b83030" stroke-width="1" shape-rendering="crispEdges"/>
<line x1="643.5" y1="454.8" x2="643.5" y2="441.6" stroke="#b83030" stroke-width="1" shape-rendering="crispEdges"/>
<line x1="655.5" y1="454.8" x2="655.5" y2="444.7" stroke="#b83030" stroke-width="1" shape-rendering="crispEdges"/>
<line x1="668.5" y1="454.8" x2="668.5" y2="447.4" stroke="#b83030" stroke-width="1" shape-rendering="crispEdges"/>
<line x1="680.5" y1="454.8" x2="680.5" y2="449.4" stroke="#b83030" stroke-width="1" shape-rendering="crispEdges"/>
<line x1="692.5" y1="454.8" x2="692.5" y2="448.6" stroke="#b83030" stroke-width="1" shape-rendering="crispEdges"/>
<line x1="705.5" y1="454.8" x2="705.5" y2="446.6" stroke="#b83030" stroke-width="1" shape-rendering="crispEdges"/>
<line x1="717.5" y1="454.8" x2="717.5" y2="443.9" stroke="#b83030" stroke-width="1" shape-rendering="crispEdges"/>
<line x1="729.5" y1="454.8" x2="729.5" y2="441.6" stroke="#b83030" stroke-width="1" shape-rendering="crispEdges"/>
<line x1="742.5" y1="454.8" x2="742.5" y2="438.1" stroke="#b83030" stroke-width="1" shape-rendering="crispEdges"/>
<line x1="754.5" y1="454.8" x2="754.5" y2="433.0" stroke="#b83030" stroke-width="1" shape-rendering="crispEdges"/>
<line x1="767.5" y1="454.8" x2="767.5" y2="426.0" stroke="#b83030" stroke-width="1" shape-rendering="crispEdges"/>
<line x1="779.5" y1="454.8" x2="779.5" y2="428.4" stroke="#b83030" stroke-width="1" shape-rendering="crispEdges"/>
<line x1="791.5" y1="454.8" x2="791.5" y2="427.2" stroke="#b83030" stroke-width="1" shape-rendering="crispEdges"/>
<line x1="804.5" y1="454.8" x2="804.5" y2="416.7" stroke="#b83030" stroke-width="1" shape-rendering="crispEdges"/>
<line x1="816.5" y1="454.8" x2="816.5" y2="406.6" stroke="#b83030" stroke-width="1" shape-rendering="crispEdges"/>
<polyline points="73.9,507.2 86.3,505.3 98.7,503.3 111.0,501.1 123.4,499.0 135.8,497.1 148.2,495.4 160.5,493.7 172.9,492.5 185.3,491.2 197.7,489.8 210.1,488.4 222.4,486.7 234.8,484.9 247.2,483.4 259.6,482.0 271.9,480.8 284.3,480.0 296.7,479.3 309.1,478.7 321.5,478.1 333.8,477.6 346.2,477.4 358.6,477.3 371.0,477.7 383.4,478.2 395.7,479.1 408.1,480.2 420.5,481.3 432.9,482.1 445.2,483.0 457.6,484.0 470.0,484.9 482.4,485.7 494.8,485.4 507.1,485.0 519.5,484.0 531.9,482.7 544.3,480.0 556.6,476.9 569.0,472.8 581.4,468.9 593.8,465.4 606.2,462.6 618.5,460.5 630.9,458.7 643.3,457.1 655.7,455.7 668.0,454.5 680.4,453.4 692.8,452.4 705.2,451.1 717.6,449.9 729.9,447.8 742.3,445.5 754.7,442.5 767.1,439.3 779.4,435.8 791.8,431.9 804.2,427.3 816.6,421.7" fill="none" stroke="#b0b000" stroke-width="0.85" />
<polyline points="73.9,503.4 86.3,500.5 98.7,497.4 111.0,493.7 123.4,491.0 135.8,489.1 148.2,487.8 160.5,486.9 172.9,486.4 185.3,486.0 197.7,484.5 210.1,481.6 222.4,479.7 234.8,477.5 247.2,477.0 259.6,476.5 271.9,476.1 284.3,476.0 296.7,475.7 309.1,475.4 321.5,475.8 333.8,475.7 346.2,476.0 358.6,477.1 371.0,478.1 383.4,479.3 395.7,481.8 408.1,484.6 420.5,486.0 432.9,486.5 445.2,487.2 457.6,487.6 470.0,487.9 482.4,488.8 494.8,486.2 507.1,484.7 519.5,482.2 531.9,478.2 544.3,470.6 556.6,467.4 569.0,460.9 581.4,452.7 593.8,450.0 606.2,449.2 618.5,449.6 630.9,451.1 643.3,450.5 655.7,450.7 668.0,450.8 680.4,450.7 692.8,449.3 705.2,447.0 717.6,444.4 729.9,441.2 742.3,437.2 754.7,431.6 767.1,424.9 779.4,422.6 791.8,418.1 804.2,408.3 816.6,397.6" fill="none" stroke="#c0c0c0" stroke-width="0.85" />
<text x="65.4" y="162.2" font-family="'Liberation Sans','Noto Sans CJK SC',sans-serif" font-size="10" fill="#b4b4b4" text-anchor="end" font-weight="normal" stroke="#b4b4b4" stroke-width="0.3">100000</text>
<text x="65.4" y="232.5" font-family="'Liberation Sans','Noto Sans CJK SC',sans-serif" font-size="10" fill="#b4b4b4" text-anchor="end" font-weight="normal" stroke="#b4b4b4" stroke-width="0.3">80000</text>
<text x="65.4" y="335.5" font-family="'Liberation Sans','Noto Sans CJK SC',sans-serif" font-size="10" fill="#b4b4b4" text-anchor="end" font-weight="normal" stroke="#b4b4b4" stroke-width="0.3">440<tspan font-family="'Noto Serif CJK SC',serif" font-size="10" stroke="none">万</tspan></text>
<text x="65.4" y="360.5" font-family="'Liberation Sans','Noto Sans CJK SC',sans-serif" font-size="10" fill="#b4b4b4" text-anchor="end" font-weight="normal" stroke="#b4b4b4" stroke-width="0.3">220<tspan font-family="'Noto Serif CJK SC',serif" font-size="10" stroke="none">万</tspan></text>
<text x="65.4" y="427.5" font-family="'Liberation Sans','Noto Sans CJK SC',sans-serif" font-size="10" fill="#b4b4b4" text-anchor="end" font-weight="normal" stroke="#b4b4b4" stroke-width="0.3">5000</text>
<text x="65.4" y="458.5" font-family="'Liberation Sans','Noto Sans CJK SC',sans-serif" font-size="10" fill="#b4b4b4" text-anchor="end" font-weight="normal" stroke="#b4b4b4" stroke-width="0.3">0</text>
<text x="65.4" y="490" font-family="'Liberation Sans','Noto Sans CJK SC',sans-serif" font-size="10" fill="#b4b4b4" text-anchor="end" font-weight="normal" stroke="#b4b4b4" stroke-width="0.3">-5000</text>
<text x="178.5" y="523" font-family="'Liberation Sans','Noto Sans CJK SC',sans-serif" font-size="10.5" fill="#a0a0a0" text-anchor="middle" font-weight="normal" >2025/01</text>
<text x="339.7" y="523" font-family="'Liberation Sans','Noto Sans CJK SC',sans-serif" font-size="10.5" fill="#a0a0a0" text-anchor="middle" font-weight="normal" >2025/04</text>
<text x="500.6" y="523" font-family="'Liberation Sans','Noto Sans CJK SC',sans-serif" font-size="10.5" fill="#a0a0a0" text-anchor="middle" font-weight="normal" >2025/07</text>
<text x="673.7" y="523" font-family="'Liberation Sans','Noto Sans CJK SC',sans-serif" font-size="10.5" fill="#a0a0a0" text-anchor="middle" font-weight="normal" >2025/10</text>
<g fill="none" stroke="#b4b4b4" stroke-width="1.05"><rect x="28.6" y="52.3" width="6.2" height="4" rx="1.5"/><rect x="35.6" y="52.3" width="6.2" height="4" rx="1.5"/><line x1="32.5" y1="54.3" x2="38" y2="54.3"/></g>
<circle cx="50.8" cy="54.6" r="2.2" fill="#f0f000"/>
<text x="57.3" y="58.3" font-family="'Liberation Serif','Noto Serif CJK SC',serif" font-size="10" fill="#c8c8c8" text-anchor="start" font-weight="normal" >碳酸锂2605<tspan fill="#ff3030" font-size="6.5" dy="-3.6" font-family="'Liberation Sans',sans-serif" font-weight="bold">M</tspan><tspan dy="3.6" dx="3.5">(GFEX lc2605)</tspan><tspan dx="11.5">周线</tspan></text>
<polyline points="212,52.8 216,56.6 220,52.8" fill="none" stroke="#c8c8c8" stroke-width="1.1"/>
<text x="71.3" y="72.7" font-family="'Liberation Sans','Noto Sans CJK SC',sans-serif" font-size="10" fill="#d8d800" text-anchor="start" font-weight="normal" stroke="#d8d800" stroke-width="0.3">MA<tspan font-family="'Noto Serif CJK SC',serif" stroke="none">组合</tspan>(5,10,20,50,0,0)</text>
<polyline points="180,68.6 183.5,71.8 187,68.6" fill="none" stroke="#d8d800" stroke-width="1.1"/>
<text x="195.6" y="72.7" font-family="'Liberation Sans','Noto Sans CJK SC',sans-serif" font-size="10" fill="#e0e0e0" text-anchor="start" font-weight="normal" stroke="#e0e0e0" stroke-width="0.3">MA5 103332.00</text>
<text x="272.8" y="72.7" font-family="'Liberation Sans','Noto Sans CJK SC',sans-serif" font-size="10" fill="#d8d800" text-anchor="start" font-weight="normal" stroke="#d8d800" stroke-width="0.3">MA10 93958.00</text>
<text x="350.8" y="72.7" font-family="'Liberation Sans','Noto Sans CJK SC',sans-serif" font-size="10" fill="#f000f0" text-anchor="start" font-weight="normal" stroke="#f000f0" stroke-width="0.3">MA20 84627.00</text>
<text x="428.3" y="72.7" font-family="'Liberation Sans','Noto Sans CJK SC',sans-serif" font-size="10" fill="#00d800" text-anchor="start" font-weight="normal" stroke="#00d800" stroke-width="0.3">MA50 76092.00</text>
<text x="68.2" y="313" font-family="'Liberation Sans','Noto Sans CJK SC',sans-serif" font-size="10.5" fill="#d8d800" text-anchor="start" font-weight="normal" >61<tspan font-family="'Noto Serif CJK SC',serif" font-size="10">周</tspan></text>
<text x="72" y="326.6" font-family="'Liberation Sans','Noto Sans CJK SC',sans-serif" font-size="10" fill="#d8d800" text-anchor="start" font-weight="normal" stroke="#d8d800" stroke-width="0.3">CJL</text>
<polyline points="88.5,321.4 92.5,325 96.5,321.4" fill="none" stroke="#d8d800" stroke-width="1.1"/>
<text x="104.4" y="326.6" font-family="'Liberation Serif','Noto Serif CJK SC',serif" font-size="10" fill="#e0e0e0" text-anchor="start" font-weight="normal" >成交量</text><text x="138.8" y="326.6" font-family="'Liberation Sans','Noto Sans CJK SC',sans-serif" font-size="10" fill="#e0e0e0" text-anchor="start" font-weight="normal" stroke="#e0e0e0" stroke-width="0.3">1603566.00</text>
<text x="199" y="326.6" font-family="'Liberation Serif','Noto Serif CJK SC',serif" font-size="10" fill="#e0e0e0" text-anchor="start" font-weight="normal" >持仓量</text><text x="232" y="326.6" font-family="'Liberation Sans','Noto Sans CJK SC',sans-serif" font-size="10" fill="#e0e0e0" text-anchor="start" font-weight="normal" stroke="#e0e0e0" stroke-width="0.3">688316.00</text>
<text x="71.4" y="392.6" font-family="'Liberation Sans','Noto Sans CJK SC',sans-serif" font-size="10" fill="#d8d800" text-anchor="start" font-weight="normal" stroke="#d8d800" stroke-width="0.3">MACD(12,26,9)</text>
<polyline points="141.8,387 145.4,390.4 149,387" fill="none" stroke="#d8d800" stroke-width="1.1"/>
<text x="157.6" y="392.6" font-family="'Liberation Sans','Noto Sans CJK SC',sans-serif" font-size="10" fill="#e0e0e0" text-anchor="start" font-weight="normal" stroke="#e0e0e0" stroke-width="0.3">DIFF 9136.24</text>
<text x="224.4" y="392.6" font-family="'Liberation Sans','Noto Sans CJK SC',sans-serif" font-size="10" fill="#d8d800" text-anchor="start" font-weight="normal" stroke="#d8d800" stroke-width="0.3">DEA 5267.95</text>
<text x="292.7" y="392.6" font-family="'Liberation Sans','Noto Sans CJK SC',sans-serif" font-size="10" fill="#e0e0e0" text-anchor="start" font-weight="normal" stroke="#e0e0e0" stroke-width="0.3">7736.58</text>
<text x="12" y="13" font-family="'Liberation Sans','Noto Sans CJK SC',sans-serif" font-size="10.8" fill="#c8c8c8" text-anchor="start" font-weight="normal" >wh6</text><text x="39.5" y="13" font-family="'Liberation Sans','Noto Sans CJK SC',sans-serif" font-size="10.8" fill="#c8c8c8" text-anchor="start" font-weight="normal" >-</text><text x="50.5" y="13" font-family="'Liberation Sans','Noto Sans CJK SC',sans-serif" font-size="10.8" fill="#c8c8c8" text-anchor="start" font-weight="normal" >Ver6.8.850</text>
<text x="120" y="13" font-family="'Liberation Sans','Noto Sans CJK SC',sans-serif" font-size="10.5" fill="#c8c8c8" text-anchor="start" font-weight="normal" >文华云节点-电信2</text>
<text x="223" y="13" font-family="'Liberation Sans','Noto Sans CJK SC',sans-serif" font-size="10.3" fill="#c8c8c8" text-anchor="start" font-weight="normal" >系统K线图</text>
<g stroke="#c0c0c0" stroke-width="1" fill="none"><line x1="997" y1="9.5" x2="1005.5" y2="9.5"/><rect x="1028.5" y="7.5" width="6.5" height="6.5" rx="1"/><path d="M1030.5 7.5 V6 H1037 V12.5 H1035"/><line x1="1061.5" y1="6" x2="1069" y2="13.5"/><line x1="1069" y1="6" x2="1061.5" y2="13.5"/></g>
<g stroke="#c8c8c8" stroke-width="1.3" fill="none" stroke-linecap="round" stroke-linejoin="round">
<path d="M12 33.2 H22.5 M17 28 L12 33.2 L17 38.5"/>
<path d="M36.6 28.6 A6.5 6.5 0 1 0 41.5 27.1"/><path d="M34.6 28.1 H37.4 V30.6" stroke-width="1.1"/>
<rect x="60.5" y="26.5" width="12.5" height="13" stroke-width="1.2"/><path d="M62.5 29.5 H71 M62.5 32.3 H66 M67.5 32.3 H71 M62.5 34.8 H66 M67.5 34.8 H71 M62.5 37.2 H66 M67.5 37.2 H71" stroke-width="1"/>
<path d="M86 33.5 L90 30 L93 32.6 L98 28.4 M85.2 38 H99.2" stroke-width="1.2"/>
<path d="M113.5 26 V29 M113.5 37 V40.5 M122.3 28.4 V30.4 M122.3 34.6 V37" stroke-width="1.2"/><rect x="111.5" y="29" width="4" height="8" stroke-width="1.2"/><rect x="120" y="30.4" width="4.6" height="4.2" stroke-width="1.2"/>
<path d="M141.2 32 L143.9 27.5 H139.1 L135.2 33.8 H139.5 L137.3 39.9 L141.8 35.6 M141.2 32 H148.7 V35.6 H141.8" stroke-width="1.1"/>
<rect x="161.3" y="26.6" width="13.4" height="12.8" stroke-width="1.3"/><path d="M161.3 36.2 H174.7" stroke-width="1.1"/>
<path d="M190 37.8 H188.8 A3.1 3.1 0 0 1 188.3 31.7 A4.9 4.9 0 0 1 197.6 30.6 A3.7 3.7 0 0 1 198 37.8 H196.8" stroke-width="1.2"/><path d="M194.6 31.2 L190.3 36 H193.4 L191.6 40.2 L196.6 34.6 H193.6 Z" fill="#c8c8c8" stroke="none"/>
<path d="M213.6 37.2 H223.4 M214.8 37 V32.4 A3.7 3.7 0 0 1 222.2 32.4 V37 M217.6 39.6 H219.4" stroke-width="1.2"/>
<path d="M618.5 33.6 L624 29.2 L629.5 33.6 M618.5 38.8 L624 34.4 L629.5 38.8" stroke-width="1"/>
<path d="M643.5 29.4 L649 33.8 L654.5 29.4 M643.5 34.6 L649 39 L654.5 34.6" stroke-width="1"/>
<rect x="671.5" y="29.2" width="5" height="10.3" stroke-width="1.1"/><path d="M674 32 H676 M674 36.5 H676" stroke-width="1"/>
<path d="M665.5 34.4 H669.5 M667 33 L665.5 34.4 L667 35.8 M678.5 34.4 H682.5 M681 33 L682.5 34.4 L681 35.8" stroke-width="1.1"/>
<path d="M694.5 39 L704 30" stroke-width="1" stroke="#b0b0b0"/>
<rect x="719.3" y="30.2" width="10.2" height="8.3" rx="0.8" stroke-width="1.1"/>
<path d="M744.5 29.5 H755.5 M750 32.3 H755.5 M750 35 H755.5 M744.5 37.6 H755.5 M744.5 40 H755.5" stroke-width="1"/>
</g>
<text x="746.8" y="36.3" font-family="'Liberation Sans','Noto Sans CJK SC',sans-serif" font-size="5.5" fill="#c8c8c8" text-anchor="middle" font-weight="bold" >G</text>
<text x="168" y="36.6" font-family="'Liberation Sans','Noto Sans CJK SC',sans-serif" font-size="9" fill="#c8c8c8" text-anchor="middle" font-weight="normal" >单</text>
<g fill="#c8c8c8"><rect x="769.5" y="34.2" width="2.2" height="2"/><rect x="775.8" y="34.2" width="2.2" height="2"/><rect x="781.6" y="34.2" width="2.2" height="2"/></g>
<text transform="translate(244,39.6) scale(0.84,1)" font-family="'Liberation Sans',sans-serif" font-size="14.5" fill="#b8b8b8" text-anchor="middle">5s</text>
<text transform="translate(269,39.6) scale(0.84,1)" font-family="'Liberation Sans',sans-serif" font-size="14.5" fill="#b8b8b8" text-anchor="middle">1</text>
<text transform="translate(295,39.6) scale(0.84,1)" font-family="'Liberation Sans',sans-serif" font-size="14.5" fill="#b8b8b8" text-anchor="middle">5</text>
<text transform="translate(319.5,39.6) scale(0.84,1)" font-family="'Liberation Sans',sans-serif" font-size="14.5" fill="#b8b8b8" text-anchor="middle">10</text>
<text transform="translate(345,39.6) scale(0.84,1)" font-family="'Liberation Sans',sans-serif" font-size="14.5" fill="#b8b8b8" text-anchor="middle">15</text>
<text transform="translate(370,39.6) scale(0.84,1)" font-family="'Liberation Sans',sans-serif" font-size="14.5" fill="#b8b8b8" text-anchor="middle">30</text>
<text transform="translate(396,39.6) scale(0.84,1)" font-family="'Liberation Sans',sans-serif" font-size="14.5" fill="#b8b8b8" text-anchor="middle">1h</text>
<text transform="translate(421.5,39.6) scale(0.84,1)" font-family="'Liberation Sans',sans-serif" font-size="14.5" fill="#b8b8b8" text-anchor="middle">2h</text>
<text transform="translate(446.5,39.6) scale(0.84,1)" font-family="'Liberation Sans',sans-serif" font-size="14.5" fill="#b8b8b8" text-anchor="middle">4h</text>
<text x="471" y="38.6" font-family="'Noto Sans CJK SC',sans-serif" font-weight="300" font-size="12.4" fill="#d0d0d0" text-anchor="middle">日</text>
<text x="496.5" y="38.6" font-family="'Noto Sans CJK SC',sans-serif" font-weight="300" font-size="12.4" fill="#d0d0d0" text-anchor="middle">周</text>
<text x="522" y="38.6" font-family="'Noto Sans CJK SC',sans-serif" font-weight="300" font-size="12.4" fill="#d0d0d0" text-anchor="middle">月</text>
<text x="547.8" y="38.6" font-family="'Noto Sans CJK SC',sans-serif" font-weight="300" font-size="12.4" fill="#d0d0d0" text-anchor="middle">季</text>
<text x="573" y="38.6" font-family="'Noto Sans CJK SC',sans-serif" font-weight="300" font-size="12.4" fill="#d0d0d0" text-anchor="middle">年</text>
<text x="598" y="38.6" font-family="'Noto Sans CJK SC',sans-serif" font-weight="300" font-size="12.4" fill="#d0d0d0" text-anchor="middle">自</text>
<text x="860.6" y="36.6" font-family="'Liberation Sans','Noto Sans CJK SC',sans-serif" font-size="10.2" fill="#d2d2d2" text-anchor="start" font-weight="normal" >板块</text>
<text x="891" y="36.6" font-family="'Liberation Sans','Noto Sans CJK SC',sans-serif" font-size="10.2" fill="#d2d2d2" text-anchor="start" font-weight="normal" >账户</text>
<text x="921" y="36.6" font-family="'Liberation Sans','Noto Sans CJK SC',sans-serif" font-size="10.2" fill="#d2d2d2" text-anchor="start" font-weight="normal" >资讯</text>
<text x="951.5" y="36.6" font-family="'Liberation Sans','Noto Sans CJK SC',sans-serif" font-size="10.2" fill="#d2d2d2" text-anchor="start" font-weight="normal" >个性化</text>
<text x="992.5" y="36.6" font-family="'Liberation Sans','Noto Sans CJK SC',sans-serif" font-size="10.2" fill="#d2d2d2" text-anchor="start" font-weight="normal" >系统工具</text>
<text x="1043" y="36.6" font-family="'Liberation Sans','Noto Sans CJK SC',sans-serif" font-size="10.2" fill="#d2d2d2" text-anchor="start" font-weight="normal" >帮助</text>
<g stroke="#4a4a4a" stroke-width="1" fill="none">
<path d="M23.5 135 V63.5 Q23.5 62.5 22.5 62.5 H3.5 Q2.5 62.5 2.5 63.5 V124.5 L14.5 135 H23.5"/>
<path d="M14.5 135.5 H3.5 Q2.5 135.5 2.5 136.5 V192 L23.5 210.6"/>
<path d="M14 202.5 H3.5 Q2.5 202.5 2.5 203.5 V259.8 L23.5 277.5"/>
<path d="M14 270.5 H3.5 Q2.5 270.5 2.5 271.5 V326.8 L23.5 345"/>
<path d="M14 337.5 H3.5 Q2.5 337.5 2.5 338.5 V393.7 L23.5 412.3"/>
<path d="M23.5 210 V441 C23.5 449 21.5 451.5 17.5 456 L0 474"/>
</g>
<text x="13.7" y="88.8" font-family="'Liberation Sans','Noto Sans CJK SC',sans-serif" font-size="10.2" fill="#8e8e8e" text-anchor="middle">分</text><text x="13.7" y="102.4" font-family="'Liberation Sans','Noto Sans CJK SC',sans-serif" font-size="10.2" fill="#8e8e8e" text-anchor="middle">时</text><text x="13.7" y="116.0" font-family="'Liberation Sans','Noto Sans CJK SC',sans-serif" font-size="10.2" fill="#8e8e8e" text-anchor="middle">图</text>
<text x="13.7" y="159.0" font-family="'Liberation Sans','Noto Sans CJK SC',sans-serif" font-size="10.2" fill="#f0f0f0" text-anchor="middle">K</text><text x="13.7" y="172.7" font-family="'Liberation Sans','Noto Sans CJK SC',sans-serif" font-size="10.2" fill="#f0f0f0" text-anchor="middle">线</text><text x="13.7" y="186.4" font-family="'Liberation Sans','Noto Sans CJK SC',sans-serif" font-size="10.2" fill="#f0f0f0" text-anchor="middle">图</text>
<text x="13.7" y="226.9" font-family="'Liberation Sans','Noto Sans CJK SC',sans-serif" font-size="10.2" fill="#8e8e8e" text-anchor="middle">资</text><text x="13.7" y="240.5" font-family="'Liberation Sans','Noto Sans CJK SC',sans-serif" font-size="10.2" fill="#8e8e8e" text-anchor="middle">讯</text><text x="13.7" y="254.1" font-family="'Liberation Sans','Noto Sans CJK SC',sans-serif" font-size="10.2" fill="#8e8e8e" text-anchor="middle">链</text>
<text transform="translate(10.2,283.3) rotate(90)" font-family="'Liberation Sans','Noto Sans CJK SC',sans-serif" font-size="10" fill="#8e8e8e">F10<tspan x="21">资</tspan><tspan x="34.9">料</tspan></text>
<text x="13.7" y="355.1" font-family="'Liberation Sans','Noto Sans CJK SC',sans-serif" font-size="10.2" fill="#8e8e8e" text-anchor="middle">页</text><text x="13.7" y="368.5" font-family="'Liberation Sans','Noto Sans CJK SC',sans-serif" font-size="10.2" fill="#8e8e8e" text-anchor="middle">面</text><text x="13.7" y="381.9" font-family="'Liberation Sans','Noto Sans CJK SC',sans-serif" font-size="10.2" fill="#8e8e8e" text-anchor="middle">下</text><text x="13.7" y="395.3" font-family="'Liberation Sans','Noto Sans CJK SC',sans-serif" font-size="10.2" fill="#8e8e8e" text-anchor="middle">单</text>
<g stroke="#761010" stroke-width="1" fill="none" shape-rendering="crispEdges">
<line x1="875" y1="96.6" x2="1079" y2="96.6" stroke="#4a0a0a"/>
<line x1="875" y1="73.5" x2="1079" y2="73.5"/>
<line x1="875" y1="97.5" x2="1079" y2="97.5"/>
<line x1="875" y1="121.5" x2="1079" y2="121.5"/>
<line x1="875" y1="309.5" x2="1079" y2="309.5"/>
<line x1="875" y1="390.5" x2="1079" y2="390.5"/>
<line x1="1078.5" y1="73" x2="1078.5" y2="511"/>
</g>
<line x1="967.5" y1="122" x2="967.5" y2="309" stroke="#701010" stroke-width="1" stroke-dasharray="1.8 1.53"/>
<text x="877.8" y="60.6" font-family="'Liberation Sans','Noto Sans CJK SC',sans-serif" font-size="10.6" fill="#ff3030" text-anchor="start" font-weight="bold" >M</text>
<text x="889.5" y="68" font-family="'Liberation Sans','Noto Sans CJK SC',sans-serif" font-size="18" fill="#e8e800" text-anchor="start" font-weight="normal" >碳酸锂<tspan font-size="18.5">2605</tspan></text><text x="997.2" y="68" font-family="'Liberation Sans','Noto Sans CJK SC',sans-serif" font-size="18.6" fill="#e8e800" text-anchor="start" font-weight="normal" >lc2605</text>
<text x="877" y="92.3" font-family="'Liberation Sans','Noto Sans CJK SC',sans-serif" font-size="11.8" fill="#e8e8e8" text-anchor="start" font-weight="normal" >卖出</text>
<text x="911" y="91.5" font-family="'Liberation Sans','Noto Sans CJK SC',sans-serif" font-size="17" fill="#ff3c3c" text-anchor="start" font-weight="normal" letter-spacing="0.2">118960</text>
<text x="1025" y="91.5" font-family="'Liberation Sans','Noto Sans CJK SC',sans-serif" font-size="16.2" fill="#e8e800" text-anchor="end" font-weight="normal" >17</text>
<text x="877" y="116.5" font-family="'Liberation Sans','Noto Sans CJK SC',sans-serif" font-size="11.8" fill="#e8e8e8" text-anchor="start" font-weight="normal" >买入</text>
<text x="911" y="116" font-family="'Liberation Sans','Noto Sans CJK SC',sans-serif" font-size="17" fill="#ff3c3c" text-anchor="start" font-weight="normal" letter-spacing="0.2">118940</text>
<text x="1025" y="116" font-family="'Liberation Sans','Noto Sans CJK SC',sans-serif" font-size="16.2" fill="#e8e800" text-anchor="end" font-weight="normal" >5</text>
<text x="876.6" y="135.0" font-family="'Liberation Sans','Noto Sans CJK SC',sans-serif" font-size="11.8" fill="#e8e8e8" text-anchor="start" font-weight="normal" >最新</text>
<text x="962" y="134.7" font-family="'Liberation Sans','Noto Sans CJK SC',sans-serif" font-size="11" fill="#ff3c3c" text-anchor="end" font-weight="bold" >118960</text>
<text x="972.6" y="135.0" font-family="'Liberation Sans','Noto Sans CJK SC',sans-serif" font-size="11.8" fill="#e8e8e8" text-anchor="start" font-weight="normal" >涨跌</text>
<text x="1073" y="134.7" font-family="'Liberation Sans','Noto Sans CJK SC',sans-serif" font-size="11" fill="#ff3c3c" text-anchor="end" font-weight="bold" >5060/4.44%</text>
<text x="876.6" y="153.63" font-family="'Liberation Sans','Noto Sans CJK SC',sans-serif" font-size="11.8" fill="#e8e8e8" text-anchor="start" font-weight="normal" >现手</text>
<text x="962" y="153.32999999999998" font-family="'Liberation Sans','Noto Sans CJK SC',sans-serif" font-size="11" fill="#e8e800" text-anchor="end" font-weight="bold" >5</text>
<text x="972.6" y="153.63" font-family="'Liberation Sans','Noto Sans CJK SC',sans-serif" font-size="11.8" fill="#e8e8e8" text-anchor="start" font-weight="normal" >速涨</text>
<text x="1073" y="153.32999999999998" font-family="'Liberation Sans','Noto Sans CJK SC',sans-serif" font-size="11" fill="#ff3c3c" text-anchor="end" font-weight="bold" >0.12%</text>
<text x="876.6" y="172.26" font-family="'Liberation Sans','Noto Sans CJK SC',sans-serif" font-size="11.8" fill="#e8e8e8" text-anchor="start" font-weight="normal" >总量</text>
<text x="962" y="171.95999999999998" font-family="'Liberation Sans','Noto Sans CJK SC',sans-serif" font-size="11" fill="#e8e800" text-anchor="end" font-weight="bold" >596125</text>
<text x="972.6" y="172.26" font-family="'Liberation Sans','Noto Sans CJK SC',sans-serif" font-size="11.8" fill="#e8e8e8" text-anchor="start" font-weight="normal" >开盘</text>
<text x="1073" y="171.95999999999998" font-family="'Liberation Sans','Noto Sans CJK SC',sans-serif" font-size="11" fill="#e8e8e8" text-anchor="end" font-weight="bold" >113900</text>
<text x="876.6" y="190.89" font-family="'Liberation Sans','Noto Sans CJK SC',sans-serif" font-size="11.8" fill="#e8e8e8" text-anchor="start" font-weight="normal" >持仓</text>
<text x="962" y="190.58999999999997" font-family="'Liberation Sans','Noto Sans CJK SC',sans-serif" font-size="11" fill="#e8e800" text-anchor="end" font-weight="bold" >688316</text>
<text x="972.6" y="190.89" font-family="'Liberation Sans','Noto Sans CJK SC',sans-serif" font-size="11.8" fill="#e8e8e8" text-anchor="start" font-weight="normal" >最高</text>
<text x="1073" y="190.58999999999997" font-family="'Liberation Sans','Noto Sans CJK SC',sans-serif" font-size="11" fill="#ff3c3c" text-anchor="end" font-weight="bold" >119580</text>
<text x="876.6" y="209.51999999999998" font-family="'Liberation Sans','Noto Sans CJK SC',sans-serif" font-size="11.8" fill="#e8e8e8" text-anchor="start" font-weight="normal" >日增</text>
<text x="962" y="209.21999999999997" font-family="'Liberation Sans','Noto Sans CJK SC',sans-serif" font-size="11" fill="#e8e800" text-anchor="end" font-weight="bold" >16427</text>
<text x="972.6" y="209.51999999999998" font-family="'Liberation Sans','Noto Sans CJK SC',sans-serif" font-size="11.8" fill="#e8e8e8" text-anchor="start" font-weight="normal" >最低</text>
<text x="1073" y="209.21999999999997" font-family="'Liberation Sans','Noto Sans CJK SC',sans-serif" font-size="11" fill="#00e000" text-anchor="end" font-weight="bold" >113800</text>
<text x="876.6" y="228.14999999999998" font-family="'Liberation Sans','Noto Sans CJK SC',sans-serif" font-size="11.8" fill="#e8e8e8" text-anchor="start" font-weight="normal" >外盘</text>
<text x="962" y="227.84999999999997" font-family="'Liberation Sans','Noto Sans CJK SC',sans-serif" font-size="11" fill="#e8e800" text-anchor="end" font-weight="bold" >300789</text>
<text x="972.6" y="228.14999999999998" font-family="'Liberation Sans','Noto Sans CJK SC',sans-serif" font-size="11.8" fill="#e8e8e8" text-anchor="start" font-weight="normal" >结算价</text>
<text x="1073" y="227.84999999999997" font-family="'Liberation Sans','Noto Sans CJK SC',sans-serif" font-size="11" fill="#e8e8e8" text-anchor="end" font-weight="bold" >0</text>
<text x="876.6" y="246.78" font-family="'Liberation Sans','Noto Sans CJK SC',sans-serif" font-size="11.8" fill="#e8e8e8" text-anchor="start" font-weight="normal" >比例</text>
<text x="962" y="246.48" font-family="'Liberation Sans','Noto Sans CJK SC',sans-serif" font-size="11" fill="#e8e800" text-anchor="end" font-weight="bold" >50.5%</text>
<text x="972.6" y="246.78" font-family="'Liberation Sans','Noto Sans CJK SC',sans-serif" font-size="11.8" fill="#e8e8e8" text-anchor="start" font-weight="normal" >昨收</text>
<text x="1073" y="246.48" font-family="'Liberation Sans','Noto Sans CJK SC',sans-serif" font-size="11" fill="#e8e8e8" text-anchor="end" font-weight="bold" >114380</text>
<text x="876.6" y="265.40999999999997" font-family="'Liberation Sans','Noto Sans CJK SC',sans-serif" font-size="11.8" fill="#e8e8e8" text-anchor="start" font-weight="normal" >内盘</text>
<text x="962" y="265.10999999999996" font-family="'Liberation Sans','Noto Sans CJK SC',sans-serif" font-size="11" fill="#e8e800" text-anchor="end" font-weight="bold" >295336</text>
<text x="972.6" y="265.40999999999997" font-family="'Liberation Sans','Noto Sans CJK SC',sans-serif" font-size="11.8" fill="#e8e8e8" text-anchor="start" font-weight="normal" >昨结</text>
<text x="1073" y="265.10999999999996" font-family="'Liberation Sans','Noto Sans CJK SC',sans-serif" font-size="11" fill="#e8e8e8" text-anchor="end" font-weight="bold" >113900</text>
<text x="876.6" y="284.03999999999996" font-family="'Liberation Sans','Noto Sans CJK SC',sans-serif" font-size="11.8" fill="#e8e8e8" text-anchor="start" font-weight="normal" >比例</text>
<text x="962" y="283.73999999999995" font-family="'Liberation Sans','Noto Sans CJK SC',sans-serif" font-size="11" fill="#e8e800" text-anchor="end" font-weight="bold" >49.5%</text>
<text x="972.6" y="284.03999999999996" font-family="'Liberation Sans','Noto Sans CJK SC',sans-serif" font-size="11.8" fill="#e8e8e8" text-anchor="start" font-weight="normal" >涨停</text>
<text x="1073" y="283.73999999999995" font-family="'Liberation Sans','Noto Sans CJK SC',sans-serif" font-size="11" fill="#ff3c3c" text-anchor="end" font-weight="bold" >124140</text>
<text x="876.6" y="302.66999999999996" font-family="'Liberation Sans','Noto Sans CJK SC',sans-serif" font-size="11.8" fill="#e8e8e8" text-anchor="start" font-weight="normal" >杠杆</text>
<text x="962" y="302.36999999999995" font-family="'Liberation Sans','Noto Sans CJK SC',sans-serif" font-size="11" fill="#e8e800" text-anchor="end" font-weight="bold" >-----</text>
<text x="972.6" y="302.66999999999996" font-family="'Liberation Sans','Noto Sans CJK SC',sans-serif" font-size="11.8" fill="#e8e8e8" text-anchor="start" font-weight="normal" >跌停</text>
<text x="1073" y="302.36999999999995" font-family="'Liberation Sans','Noto Sans CJK SC',sans-serif" font-size="11" fill="#00e000" text-anchor="end" font-weight="bold" >103660</text>
<polygon points="1010,226 1017.5,226 1013.7,229.8" fill="#c0c0c0"/>
<text x="879.5" y="323.5" font-family="'Liberation Sans','Noto Sans CJK SC',sans-serif" font-size="12" fill="#8c8c8c" text-anchor="start" font-weight="normal" >时间</text>
<text x="976.5" y="323.5" font-family="'Liberation Sans','Noto Sans CJK SC',sans-serif" font-size="11.8" fill="#8c8c8c" text-anchor="end" font-weight="normal" >价位</text>
<text x="1011.5" y="323.5" font-family="'Liberation Sans','Noto Sans CJK SC',sans-serif" font-size="11.8" fill="#8c8c8c" text-anchor="end" font-weight="normal" >大单</text>
<text x="1042.5" y="323.5" font-family="'Liberation Sans','Noto Sans CJK SC',sans-serif" font-size="11.8" fill="#8c8c8c" text-anchor="end" font-weight="normal" >增仓</text>
<text x="1073" y="323.5" font-family="'Liberation Sans','Noto Sans CJK SC',sans-serif" font-size="11.8" fill="#8c8c8c" text-anchor="end" font-weight="normal" >开平</text>
<text x="880" y="341.3" font-family="'Liberation Sans','Noto Sans CJK SC',sans-serif" font-size="11.1" fill="#b4b4b4" text-anchor="start" font-weight="bold" >14:03:25</text>
<text x="976.5" y="341.3" font-family="'Liberation Sans','Noto Sans CJK SC',sans-serif" font-size="11.1" fill="#ff3c3c" text-anchor="end" font-weight="bold" >118900</text>
<text x="1011" y="341.3" font-family="'Liberation Sans','Noto Sans CJK SC',sans-serif" font-size="11.1" fill="#ff3c3c" text-anchor="end" font-weight="bold" >29</text>
<text x="1043" y="341.3" font-family="'Liberation Sans','Noto Sans CJK SC',sans-serif" font-size="11.1" fill="#e8e800" text-anchor="end" font-weight="bold" >14</text>
<text x="1073.3" y="341.7" font-family="'Liberation Sans','Noto Sans CJK SC',sans-serif" font-size="11.9" fill="#dcdc00" text-anchor="end" font-weight="normal" >多开</text>
<text x="880" y="361.2" font-family="'Liberation Sans','Noto Sans CJK SC',sans-serif" font-size="11.1" fill="#b4b4b4" text-anchor="start" font-weight="bold" >14:03:47</text>
<text x="976.5" y="361.2" font-family="'Liberation Sans','Noto Sans CJK SC',sans-serif" font-size="11.1" fill="#ff3c3c" text-anchor="end" font-weight="bold" >118840</text>
<text x="1011" y="361.2" font-family="'Liberation Sans','Noto Sans CJK SC',sans-serif" font-size="11.1" fill="#00e000" text-anchor="end" font-weight="bold" >25</text>
<text x="1043" y="361.2" font-family="'Liberation Sans','Noto Sans CJK SC',sans-serif" font-size="11.1" fill="#e8e800" text-anchor="end" font-weight="bold" >10</text>
<text x="1073.3" y="361.59999999999997" font-family="'Liberation Sans','Noto Sans CJK SC',sans-serif" font-size="11.9" fill="#dcdc00" text-anchor="end" font-weight="normal" >空开</text>
<polyline points="876.5,354.2 879.5,357.4 876.5,360.6" fill="none" stroke="#e8e800" stroke-width="1.1"/>
<text x="879.5" y="405.5" font-family="'Liberation Sans','Noto Sans CJK SC',sans-serif" font-size="12" fill="#8c8c8c" text-anchor="start" font-weight="normal" >时间</text>
<text x="976.5" y="405.5" font-family="'Liberation Sans','Noto Sans CJK SC',sans-serif" font-size="11.8" fill="#8c8c8c" text-anchor="end" font-weight="normal" >价位</text>
<text x="1011.5" y="405.5" font-family="'Liberation Sans','Noto Sans CJK SC',sans-serif" font-size="11.8" fill="#8c8c8c" text-anchor="end" font-weight="normal" >现手</text>
<text x="1042.5" y="405.5" font-family="'Liberation Sans','Noto Sans CJK SC',sans-serif" font-size="11.8" fill="#8c8c8c" text-anchor="end" font-weight="normal" >增仓</text>
<text x="1073" y="405.5" font-family="'Liberation Sans','Noto Sans CJK SC',sans-serif" font-size="11.8" fill="#8c8c8c" text-anchor="end" font-weight="normal" >开平</text>
<text x="880" y="423.6" font-family="'Liberation Sans','Noto Sans CJK SC',sans-serif" font-size="11.1" fill="#b4b4b4" text-anchor="start" font-weight="bold" >14:04:10</text>
<text x="976.5" y="423.6" font-family="'Liberation Sans','Noto Sans CJK SC',sans-serif" font-size="11.1" fill="#ff3c3c" text-anchor="end" font-weight="bold" >118920</text>
<text x="1011" y="423.6" font-family="'Liberation Sans','Noto Sans CJK SC',sans-serif" font-size="11.1" fill="#00e000" text-anchor="end" font-weight="bold" >10</text>
<text x="1043" y="423.6" font-family="'Liberation Sans','Noto Sans CJK SC',sans-serif" font-size="11.1" fill="#e8e800" text-anchor="end" font-weight="bold" >2</text>
<text x="1073.3" y="424.0" font-family="'Liberation Sans','Noto Sans CJK SC',sans-serif" font-size="11.9" fill="#dcdc00" text-anchor="end" font-weight="normal" >空开</text>
<text x="880" y="443.8" font-family="'Liberation Sans','Noto Sans CJK SC',sans-serif" font-size="11.1" fill="#b4b4b4" text-anchor="start" font-weight="bold" >14:04:10</text>
<text x="976.5" y="443.8" font-family="'Liberation Sans','Noto Sans CJK SC',sans-serif" font-size="11.1" fill="#ff3c3c" text-anchor="end" font-weight="bold" >118960</text>
<text x="1011" y="443.8" font-family="'Liberation Sans','Noto Sans CJK SC',sans-serif" font-size="11.1" fill="#ff3c3c" text-anchor="end" font-weight="bold" >3</text>
<text x="1043" y="443.8" font-family="'Liberation Sans','Noto Sans CJK SC',sans-serif" font-size="11.1" fill="#e8e800" text-anchor="end" font-weight="bold" >1</text>
<text x="1073.3" y="444.2" font-family="'Liberation Sans','Noto Sans CJK SC',sans-serif" font-size="11.9" fill="#dcdc00" text-anchor="end" font-weight="normal" >多开</text>
<text x="880" y="464" font-family="'Liberation Sans','Noto Sans CJK SC',sans-serif" font-size="11.1" fill="#b4b4b4" text-anchor="start" font-weight="bold" >14:04:11</text>
<text x="976.5" y="464" font-family="'Liberation Sans','Noto Sans CJK SC',sans-serif" font-size="11.1" fill="#ff3c3c" text-anchor="end" font-weight="bold" >118920</text>
<text x="1011" y="464" font-family="'Liberation Sans','Noto Sans CJK SC',sans-serif" font-size="11.1" fill="#00e000" text-anchor="end" font-weight="bold" >8</text>
<text x="1043" y="464" font-family="'Liberation Sans','Noto Sans CJK SC',sans-serif" font-size="11.1" fill="#e8e800" text-anchor="end" font-weight="bold" >-4</text>
<text x="1073.3" y="464.4" font-family="'Liberation Sans','Noto Sans CJK SC',sans-serif" font-size="11.9" fill="#dcdc00" text-anchor="end" font-weight="normal" >多平</text>
<text x="880" y="484.2" font-family="'Liberation Sans','Noto Sans CJK SC',sans-serif" font-size="11.1" fill="#b4b4b4" text-anchor="start" font-weight="bold" >14:04:11</text>
<text x="976.5" y="484.2" font-family="'Liberation Sans','Noto Sans CJK SC',sans-serif" font-size="11.1" fill="#ff3c3c" text-anchor="end" font-weight="bold" >118960</text>
<text x="1011" y="484.2" font-family="'Liberation Sans','Noto Sans CJK SC',sans-serif" font-size="11.1" fill="#ff3c3c" text-anchor="end" font-weight="bold" >7</text>
<text x="1043" y="484.2" font-family="'Liberation Sans','Noto Sans CJK SC',sans-serif" font-size="11.1" fill="#e8e800" text-anchor="end" font-weight="bold" >-1</text>
<text x="1073.3" y="484.59999999999997" font-family="'Liberation Sans','Noto Sans CJK SC',sans-serif" font-size="11.9" fill="#dcdc00" text-anchor="end" font-weight="normal" >空平</text>
<text x="880" y="504.4" font-family="'Liberation Sans','Noto Sans CJK SC',sans-serif" font-size="11.1" fill="#b4b4b4" text-anchor="start" font-weight="bold" >14:04:12</text>
<text x="976.5" y="504.4" font-family="'Liberation Sans','Noto Sans CJK SC',sans-serif" font-size="11.1" fill="#ff3c3c" text-anchor="end" font-weight="bold" >118960</text>
<text x="1011" y="504.4" font-family="'Liberation Sans','Noto Sans CJK SC',sans-serif" font-size="11.1" fill="#ff3c3c" text-anchor="end" font-weight="bold" >5</text>
<text x="1043" y="504.4" font-family="'Liberation Sans','Noto Sans CJK SC',sans-serif" font-size="11.1" fill="#e8e800" text-anchor="end" font-weight="bold" >3</text>
<text x="1073.3" y="504.79999999999995" font-family="'Liberation Sans','Noto Sans CJK SC',sans-serif" font-size="11.9" fill="#dcdc00" text-anchor="end" font-weight="normal" >多开</text>
<polyline points="876.5,497.4 879.5,500.6 876.5,503.8" fill="none" stroke="#e8e800" stroke-width="1.1"/>
<g stroke="#761010" stroke-width="1" fill="none">
<path d="M882.6 511.5 L888.5 523.8 H1036 L1041.9 511.5"/>
<path d="M922.7 511.5 L928.6 523.8 M927.9 511.5 L921.9 523.8"/>
<path d="M961.1 511.5 L967.1 523.8 M966.3 511.5 L960.4 523.8"/>
<path d="M999.9 511.5 L1005.9 523.8 M1005.1 511.5 L999.1 523.8"/>
</g>
<text x="905.8" y="521.3" font-family="'Liberation Serif','Noto Serif CJK SC',serif" font-size="9.8" fill="#8c8c8c" text-anchor="middle" font-weight="normal" >明细</text>
<text x="944.5" y="521.3" font-family="'Liberation Serif','Noto Serif CJK SC',serif" font-size="9.8" fill="#8c8c8c" text-anchor="middle" font-weight="normal" >分价</text>
<text x="983.3" y="521.3" font-family="'Liberation Serif','Noto Serif CJK SC',serif" font-size="9.8" fill="#8c8c8c" text-anchor="middle" font-weight="normal" >分笔</text>
<text x="1021.5" y="521.3" font-family="'Liberation Serif','Noto Serif CJK SC',serif" font-size="9.8" fill="#8c8c8c" text-anchor="middle" font-weight="normal" >统计</text>
<text x="29" y="542.3" font-family="'Liberation Sans','Noto Sans CJK SC',sans-serif" font-size="10.3" fill="#c0c0c0" text-anchor="start" font-weight="normal" >小编导读</text>
<text x="80" y="542.3" font-family="'Liberation Sans','Noto Sans CJK SC',sans-serif" font-size="10.3" fill="#ee8a1e" text-anchor="start" font-weight="normal" >我的合约</text>
<rect x="75" y="548.8" width="50.5" height="1.2" fill="#e8801a"/>
<path d="M131 538.5 H139.5 M135.2 534.2 V542.8" stroke="#e0e0e0" stroke-width="1.4" fill="none"/>
<text x="32" y="565.6" font-family="'Noto Sans CJK SC',sans-serif" font-weight="500" font-size="10" fill="#f03838">上证指数</text>
<text x="78" y="565.4" font-family="'DejaVu Sans Mono','Liberation Mono',monospace" font-weight="bold" font-size="9.2" fill="#f03838" xml:space="preserve">3922.27 +4.90</text>
<text x="175" y="565.6" font-family="'Noto Sans CJK SC',sans-serif" font-weight="500" font-size="10" fill="#f03838">文华商品</text>
<text x="220.5" y="565.4" font-family="'DejaVu Sans Mono','Liberation Mono',monospace" font-weight="bold" font-size="9.2" fill="#f03838" xml:space="preserve">162.08 +0.47</text>
<rect x="860.5" y="553.5" width="39.5" height="15.5" fill="#2f3137" stroke="#4a4c52" stroke-width="1"/>
<rect x="903.5" y="553.5" width="41.5" height="15.5" fill="#2f3137" stroke="#4a4c52" stroke-width="1"/>
<text x="880.3" y="565.3" font-family="'Liberation Sans','Noto Sans CJK SC',sans-serif" font-size="10.5" fill="#d4d4d4" text-anchor="middle" font-weight="normal" >期货户</text>
<text x="924.3" y="565.3" font-family="'Liberation Sans','Noto Sans CJK SC',sans-serif" font-size="10.5" fill="#d4d4d4" text-anchor="middle" font-weight="normal" >外盘户</text>
<line x1="954.5" y1="556" x2="954.5" y2="566.5" stroke="#8e1414" stroke-width="1"/>
<rect x="966.3" y="555" width="15" height="13" fill="#e0e0e0"/><rect x="966.3" y="555" width="14" height="12" fill="#10b010"/>
<g stroke="#0a5a0a" stroke-width="0.6"><line x1="968.3" y1="555" x2="968.3" y2="567"/><line x1="970.3" y1="555" x2="970.3" y2="567"/><line x1="972.3" y1="555" x2="972.3" y2="567"/><line x1="974.3" y1="555" x2="974.3" y2="567"/><line x1="976.3" y1="555" x2="976.3" y2="567"/><line x1="978.3" y1="555" x2="978.3" y2="567"/><line x1="966.3" y1="557.0" x2="980.3" y2="557.0"/><line x1="966.3" y1="559.0" x2="980.3" y2="559.0"/><line x1="966.3" y1="561.0" x2="980.3" y2="561.0"/><line x1="966.3" y1="563.0" x2="980.3" y2="563.0"/><line x1="966.3" y1="565.0" x2="980.3" y2="565.0"/></g>
<g fill="#22c422"><rect x="985.5" y="564.5" width="2.2" height="2.6"/><rect x="989" y="561.5" width="2.2" height="5.6"/><rect x="992.5" y="558.5" width="2.2" height="8.6"/><rect x="996" y="555.2" width="2.2" height="11.9"/></g>
<text x="1003.6" y="567" font-family="'Liberation Sans','Noto Sans CJK SC',sans-serif" font-size="10.6" fill="#d4d4d4" text-anchor="start" font-weight="normal" >14:04:12 - wh</text>
<rect x="1075" y="574" width="2" height="6" fill="#c8d0d0"/>
<g fill="#e8e8e8"><rect x="991" y="578" width="2" height="2"/><rect x="995" y="578" width="2" height="2"/><rect x="1000" y="578.5" width="1.5" height="1.5"/><rect x="1004" y="578" width="2" height="2"/><rect x="1008" y="578.5" width="1.5" height="1.5"/></g>
<path d="M888 525.5 H1080 V546.6 H888 Z" fill="#ffffff"/>
<g transform="rotate(-15.5 882.3 534.6)"><rect x="871.4" y="523.7" width="21.8" height="21.8" rx="3.2" fill="#f2591d"/>
<text transform="translate(882.3,542.6) scale(1.32,1)" font-family="'Liberation Sans',sans-serif" font-weight="bold" font-style="italic" font-size="21.5" fill="#fff" text-anchor="middle">S</text></g>
<text x="907.1" y="541.6" font-family="'Noto Sans CJK SC',sans-serif" font-weight="900" font-size="13.4" fill="#1a70e0" text-anchor="middle">中</text>
<circle cx="925.1" cy="534.2" r="1.3" fill="none" stroke="#1a70e0" stroke-width="1.3"/><path d="M930.6 536.6 q1.7 0.3 0.9 2.2 l-0.9 1.5" fill="none" stroke="#1a70e0" stroke-width="1.7" stroke-linecap="round"/>
<circle cx="948.1" cy="536.8" r="6.2" fill="#1a70e0"/><circle cx="946" cy="534.8" r="0.95" fill="#fff"/><circle cx="950.2" cy="534.8" r="0.95" fill="#fff"/><path d="M944.9 537.8 H951.3 A3.2 3.2 0 0 1 944.9 537.8 Z" fill="#fff"/>
<rect x="965.5" y="529.9" width="4.6" height="8.8" rx="2.3" fill="#1a70e0"/><path d="M963.6 536.4 A4.2 4.2 0 0 0 972 536.4 M967.8 540.8 V543.2" fill="none" stroke="#1a70e0" stroke-width="1.2"/>
<rect x="982.5" y="531.5" width="12" height="9" rx="1.6" fill="#1a70e0"/><g fill="#fff"><rect x="984.3" y="533.4" width="1.5" height="1.3"/><rect x="986.7" y="533.4" width="1.5" height="1.3"/><rect x="989.1" y="533.4" width="1.5" height="1.3"/><rect x="991.5" y="533.4" width="1.5" height="1.3"/><rect x="984.3" y="535.6" width="1.5" height="1.3"/><rect x="986.7" y="535.6" width="1.5" height="1.3"/><rect x="989.1" y="535.6" width="1.5" height="1.3"/><rect x="991.5" y="535.6" width="1.5" height="1.3"/><rect x="984.3" y="537.9" width="8.7" height="1.2"/></g>
<circle cx="1008.5" cy="532.6" r="3" fill="#1a70e0"/><path d="M1003.4 542.2 V539.4 A4.6 3.6 0 0 1 1012.4 537 H1008.6 V542.2 Z" fill="#1a70e0"/><rect x="1009.4" y="537.2" width="6.2" height="5" rx="0.6" fill="#1a70e0"/><path d="M1011.4 541 V539 H1013.4 V541" fill="none" stroke="#fff" stroke-width="0.8"/>
<defs><linearGradient id="sh" x1="0" y1="0" x2="0.7" y2="1"><stop offset="0" stop-color="#ff6a3c"/><stop offset="0.45" stop-color="#d95ad0"/><stop offset="0.8" stop-color="#8a6cf4"/><stop offset="1" stop-color="#8fd8ff"/></linearGradient></defs>
<path d="M1022 533.6 L1025.8 531.4 Q1028.3 533.2 1030.8 531.4 L1034.6 533.6 L1033 536.2 L1031.6 535.5 V541.2 H1025 V535.5 L1023.6 536.2 Z" fill="url(#sh)"/><circle cx="1034.6" cy="529" r="2.4" fill="#f4502c"/>
<g fill="#1a70e0"><rect x="1044" y="531.5" width="5.2" height="5.2" rx="1.2"/><rect x="1050.5" y="531.5" width="5.2" height="5.2" rx="1.2"/><rect x="1044" y="538" width="5.2" height="5.2" rx="1.2"/><rect x="1050.5" y="538" width="5.2" height="5.2" rx="1.2"/></g><rect x="1052.1" y="533.1" width="2" height="2" fill="#fff"/>
<path d="M1069.5 530.6 L1071.5 532.4 L1074.3 532.2 L1074.5 534.9 L1076 537 L1074.5 539.1 L1074.3 541.8 L1071.5 541.6 L1069.5 543.4 L1067.5 541.6 L1064.7 541.8 L1064.5 539.1 L1063 537 L1064.5 534.9 L1064.7 532.2 L1067.5 532.4 Z" fill="#1a70e0"/><circle cx="1069.5" cy="536.4" r="1.7" fill="#fff"/><path d="M1069.5 537.5 V542" stroke="#fff" stroke-width="1.2" fill="none"/>
</svg>
</body></html>
